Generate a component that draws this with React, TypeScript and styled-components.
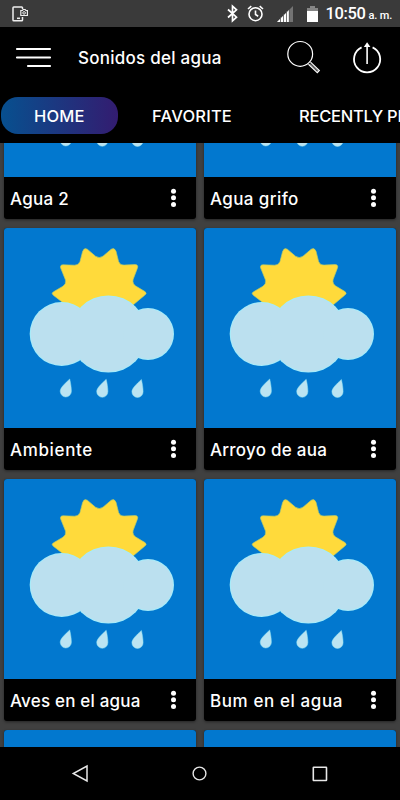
import React from "react";
import styled, { createGlobalStyle } from "styled-components";

const Global = createGlobalStyle`
  * { box-sizing: border-box; }
  body { margin: 0; background: #000; }
`;

const Screen = styled.div`
  width: 400px;
  height: 800px;
  display: flex;
  flex-direction: column;
  overflow: hidden;
  background: #000;
  color: #fff;
  font-family: Inter, "Open Sans", sans-serif;
`;

const StatusBar = styled.div`
  flex: none;
  height: 27px;
  background: #3a3a3a;
  display: flex;
  align-items: center;
  padding: 0 9px 0 12px;
  font-family: Roboto, sans-serif;
  font-weight: 500;
`;

const Icon = styled.svg<{ $ml?: number }>`
  flex: none;
  display: block;
  overflow: visible;
  margin-left: ${(p) => p.$ml ?? 0}px;
`;

const Clock = styled.div`
  margin-left: 8px;
  width: 65.5px;
  display: flex;
  align-items: baseline;
  white-space: nowrap;
  font-size: 16.5px;
  letter-spacing: -0.4px;
  line-height: 27px;
  padding-top: 2px;
`;

const Meridiem = styled.span`
  font-size: 11px;
  letter-spacing: -0.1px;
  margin-left: 3px;
`;

const Spacer = styled.div`
  flex: 1;
`;

const Header = styled.header`
  flex: none;
  height: 61px;
  display: flex;
  align-items: center;
  padding-left: 16px;
`;

const Label = styled.span<{ $size?: number; $track?: number }>`
  font-size: ${(p) => p.$size ?? 17}px;
  letter-spacing: ${(p) => p.$track ?? 0}px;
  font-weight: 500;
  line-height: 22px;
  white-space: nowrap;
`;

const Title = styled(Label).attrs({ as: "h1" })`
  margin: 1px 0 0 27px;
  width: 183px;
`;

const Tabs = styled.nav`
  flex: none;
  height: 55px;
  display: flex;
  align-items: flex-start;
  padding: 9px 0 0 1px;
  overflow: hidden;
`;

const Tab = styled.div<{ $active?: boolean; $width: number; $pad?: number }>`
  flex: none;
  width: ${(p) => p.$width}px;
  height: 37px;
  padding: 0 0 0 ${(p) => p.$pad ?? 0}px;
  display: flex;
  align-items: center;
  border-radius: 17px;
  background: ${(p) => (p.$active ? "linear-gradient(90deg, #07508f, #331c70)" : "none")};
`;

const Content = styled.main`
  flex: none;
  height: 604px;
  overflow: hidden;
  background: #404040;
`;

const Grid = styled.div`
  display: grid;
  grid-template-columns: 191.6px 191.6px;
  grid-auto-rows: 242px;
  gap: 9px 8.4px;
  padding-left: 4px;
  margin-top: -166px;
`;

const Card = styled.article`
  border-radius: 3px;
  overflow: hidden;
  background: #000;
  box-shadow: 0 1px 3px rgba(0, 0, 0, 0.45);
`;

const Art = styled.svg`
  display: block;
  width: 100%;
  height: 200px;
  background: #0278cf;
`;

const Caption = styled.div`
  height: 42px;
  display: flex;
  align-items: center;
  justify-content: space-between;
  padding: 1px 19.5px 0 6px;
`;

const NavBar = styled.footer`
  flex: none;
  height: 53px;
  display: flex;
  align-items: center;
  padding-left: 72px;
`;

const DROP = "M65.7 151 C66.6 155 67.4 159.5 67.4 163.2 A5.6 5.8 0 0 1 56.2 163.2 C56.2 159.8 61 155.4 65.7 151Z";

function Weather() {
  return (
    <Art viewBox="0 0 191.6 200" preserveAspectRatio="xMinYMin slice">
      <path
        d="M62 77 L49.3 67.2 Q47 65.3 49.5 63.8 L59 58.2 Q62.4 56 61.5 52 L56.7 40 Q55.7 37 59 36.8 L70.5 37.2 Q74.8 37.2 76 33.5 L78.7 23.2 Q80 19.4 83.3 21.2 L91.5 28.2 Q95.2 31 99 28.2 L107.2 21.2 Q110.6 19.2 112 23.2 L114.6 33.5 Q115.8 37.2 120 37.1 L131.2 36.6 Q134.8 36.9 133.3 40.4 L129.2 51.2 Q128 55.8 131.7 58 L141 63.6 Q143.4 65.2 140.7 67.2 L129 77 L96 104Z"
        fill="#ffda3b"
        stroke="#b9cb68"
        strokeWidth="0.7"
      />
      <g fill="#a5ecfa">
        <circle cx="57.7" cy="106" r="32" />
        <circle cx="104.4" cy="106" r="38.6" />
        <circle cx="144" cy="106" r="26" />
      </g>
      <g fill="#bbe0ef">
        <circle cx="57.7" cy="106" r="31" />
        <circle cx="104.4" cy="106" r="37.7" />
        <circle cx="144" cy="106" r="25" />
      </g>
      <g fill="#bbe4f2" stroke="#8ee5f5" strokeWidth="0.5">
        <path d={DROP} />
        <path d={DROP} transform="translate(36.5 0.3)" />
        <path d={DROP} transform="translate(71.7 0.5)" />
      </g>
    </Art>
  );
}

const sounds = [
  { name: "Agua 2", track: 0.3 },
  { name: "Agua grifo", track: 0.4 },
  { name: "Ambiente", track: 0.65 },
  { name: "Arroyo de aua", track: 0.25 },
  { name: "Aves en el agua", track: 0.2 },
  { name: "Bum en el agua", track: 0.6 },
  { name: "", track: 0 },
  { name: "", track: 0 },
];

export default function App() {
  return (
    <Screen>
      <Global />
      <StatusBar>
        <Icon width="17" height="16" viewBox="0 0 17 16" fill="none" stroke="#eee" strokeWidth="1.5">
          <path d="M10.5 3V1.8Q10.5 1 9.7 1H1.8Q1 1 1 1.8V14Q1 14.8 1.8 14.8H9.7Q10.5 14.8 10.5 14V11" />
          <path d="M8.8 4.5h1.6l.7-1h2.1l.7 1h1.5v5H8.8z" strokeWidth="1.2" />
          <circle cx="12.1" cy="6.9" r="1.3" strokeWidth="1" />
          <path d="M5 12.3h3" />
        </Icon>
        <Spacer />
        <Icon width="11" height="17" viewBox="0 0 11 17" fill="none" stroke="#fff" strokeWidth="1.7">
          <path d="M1 4.5 9.5 12.2 5.5 15.8V1.2L9.5 4.8 1 12.5" />
        </Icon>
        <Icon $ml={9} width="17" height="17" viewBox="0 0 17 17" fill="none" stroke="#fff" strokeWidth="1.6">
          <circle cx="8.5" cy="9.2" r="6.5" />
          <path d="M8.5 5.5v4l2.7 1.7M1 4l3.3-2.8M16 4l-3.3-2.8" />
        </Icon>
        <Icon $ml={12.5} width="16" height="16" viewBox="0 0 16 16">
          <path d="M0 16 16 0V16Z" fill="#747474" />
          <path d="M0 16 12 4V16Z" fill="#fff" />
          <path d="M3.5 11v5M6.5 8v8M9.5 5v11M12.3 3v13" stroke="#555" strokeWidth="0.8" />
        </Icon>
        <Icon $ml={14} width="11" height="16" viewBox="0 0 11 16">
          <path d="M0 2h3V0h5v2h3v4H0z" fill="#858585" />
          <path d="M0 5h11v11H0z" fill="#fff" />
        </Icon>
        <Clock>
          10:50<Meridiem>a. m.</Meridiem>
        </Clock>
      </StatusBar>
      <Header>
        <Icon width="35" height="22" viewBox="0 0 35 22" stroke="#fff" strokeWidth="2.2" strokeLinecap="round">
          <path d="M1 2H34M1 10.5H34M12 19H34" />
        </Icon>
        <Title $track={0.25}>Sonidos del agua</Title>
        <Icon $ml={26} width="34" height="34" viewBox="0 0 34 34" fill="none" stroke="#fff" strokeWidth="1.2">
          <circle cx="13.2" cy="12.9" r="12.4" />
          <path d="M21.5 23.2 30.3 31.6 32.3 29.5 23.5 21.1" />
          <path d="M23.2 22.9 31 30.3" strokeWidth="0.7" />
        </Icon>
        <Icon $ml={32} width="28" height="32" viewBox="0 0 28 32" fill="none" stroke="#fff" strokeWidth="1.8">
          <path d="M8.6 5.4A13.1 13.1 0 1 0 19.6 5.4" />
          <path d="M14.1 22V4" strokeWidth="1.6" />
          <path d="M10.8 4.9 14.1.2 17.4 4.9Z" fill="#fff" stroke="none" />
        </Icon>
      </Header>
      <Tabs>
        <Tab $active $width={116.5} $pad={33}>
          <Label $size={16.5} $track={0.2}>HOME</Label>
        </Tab>
        <Tab $width={180.5} $pad={34.5}>
          <Label $size={16.5} $track={0.2}>FAVORITE</Label>
        </Tab>
        <Tab $width={180} $pad={1}>
          <Label $size={16.5} $track={-0.25}>RECENTLY PLAYED</Label>
        </Tab>
      </Tabs>
      <Content>
        <Grid>
          {sounds.map((s, i) => (
            <Card key={i}>
              <Weather />
              <Caption>
                <Label $track={s.track}>{s.name}</Label>
                <Icon width="5" height="19" viewBox="0 0 5 19" fill="#fff">
                  <circle cx="2.5" cy="2.2" r="2.5" />
                  <circle cx="2.5" cy="8.8" r="2.5" />
                  <circle cx="2.5" cy="15.4" r="2.5" />
                </Icon>
              </Caption>
            </Card>
          ))}
        </Grid>
      </Content>
      <NavBar>
        <Icon width="16" height="17" viewBox="0 0 16 17" fill="none" stroke="#e8e8e8" strokeWidth="1.5">
          <path d="M15 1V16L1.3 8.5Z" />
        </Icon>
        <Icon $ml={104.2} width="15" height="15" viewBox="0 0 15 15" fill="none" stroke="#e8e8e8" strokeWidth="1.4">
          <circle cx="7.5" cy="7.5" r="6.4" />
        </Icon>
        <Icon $ml={104.8} width="16" height="16" viewBox="0 0 16 16" fill="none" stroke="#e8e8e8" strokeWidth="1.6">
          <rect x="1.3" y="1.3" width="13.2" height="13.2" rx="0.4" />
        </Icon>
      </NavBar>
    </Screen>
  );
}
